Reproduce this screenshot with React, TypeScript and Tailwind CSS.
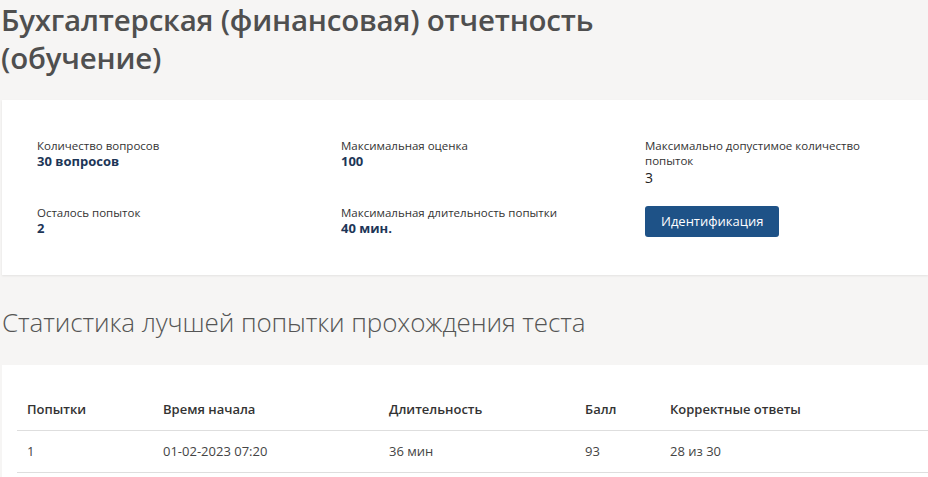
import React from 'react';

const stats = [
  { label: 'Количество вопросов', value: '30 вопросов', bold: true },
  { label: 'Максимальная оценка', value: '100', bold: true },
  { label: 'Максимально допустимое количество попыток', value: '3', bold: false },
  { label: 'Осталось попыток', value: '2', bold: true },
  { label: 'Максимальная длительность попытки', value: '40 мин.', bold: true },
];

const columns = ['Попытки', 'Время начала', 'Длительность', 'Балл', 'Корректные ответы'];
const rows = [['1', '01-02-2023 07:20', '36 мин', '93', '28 из 30']];

function Stat({ label, value, bold }: { label: string; value: string; bold: boolean }) {
  return (
    <div className="max-w-[226px]">
      <div className="text-[11.5px] leading-[15px] text-[#333]">{label}</div>
      <div
        className={
          bold
            ? 'text-[13px] leading-[16px] font-bold text-[#1d3657]'
            : 'text-[14px] leading-[19px] text-[#222]'
        }
      >
        {value}
      </div>
    </div>
  );
}

export default function App() {
  return (
    <div className="min-h-screen bg-[#f6f5f4] font-['Open_Sans',sans-serif] overflow-hidden">
      {/* Page title */}
      <h1 className="pl-[1px] pt-[1px] text-[29.5px] leading-[38px] font-semibold text-[#4f4f4f] tracking-[-0.2px]">
        Бухгалтерская (финансовая) отчетность
        <br />
        (обучение)
      </h1>

      {/* Test summary card */}
      <div className="mt-[23px] ml-[2px] bg-white shadow-[0_1px_2px_rgba(0,0,0,0.08)] pl-[35px] pt-[38px] pb-[38px]">
        <div className="grid grid-cols-[304px_304px_1fr] gap-y-[18px]">
          <Stat {...stats[0]} />
          <Stat {...stats[1]} />
          <Stat {...stats[2]} />
          <Stat {...stats[3]} />
          <Stat {...stats[4]} />
          <div className="pt-[1px]">
            <button className="h-[31px] px-[16px] rounded-[3px] bg-[#1e5287] text-white text-[13px]">
              Идентификация
            </button>
          </div>
        </div>
      </div>

      {/* Best attempt stats */}
      <h2 className="mt-[30px] pl-[2px] text-[26px] leading-[34px] font-light text-[#555] tracking-[-0.1px]">
        Статистика лучшей попытки прохождения теста
      </h2>

      <div className="mt-[26px] ml-[2px] bg-white pt-[25px] pl-[15px] pb-[10px]">
        <table className="w-full text-[13px] text-left border-collapse">
          <thead>
            <tr className="border-b border-[#dedede]">
              {columns.map((c, i) => (
                <th
                  key={c}
                  className={
                    'font-semibold text-[#333] py-[10px] px-[10px] ' +
                    ['w-[136px]', 'w-[226px]', 'w-[196px]', 'w-[85px]', ''][i]
                  }
                >
                  {c}
                </th>
              ))}
            </tr>
          </thead>
          <tbody>
            {rows.map((r) => (
              <tr key={r[0]} className="border-b border-[#dedede]">
                {r.map((v, i) => (
                  <td key={i} className="py-[11px] px-[10px] text-[#444]">
                    {v}
                  </td>
                ))}
              </tr>
            ))}
          </tbody>
        </table>
      </div>
    </div>
  );
}
